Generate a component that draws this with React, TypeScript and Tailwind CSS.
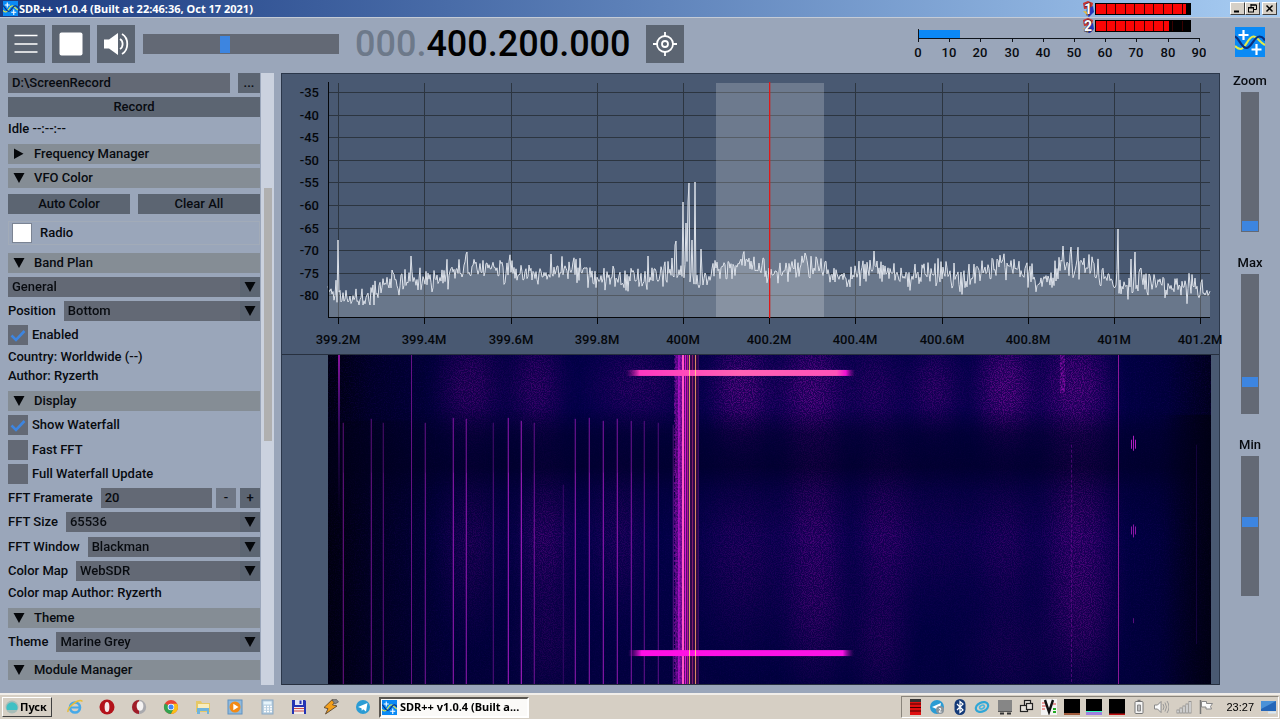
import React, { useId, useState } from "react";

/* ---------- helpers ---------- */

function makeRandom(seed: number) {
  let s = seed;
  return () => {
    s = (s * 1664525 + 1013904223) % 4294967296;
    return s / 4294967296;
  };
}

const envelope: [number, number][] = [
  [0, 219], [20, 223], [38, 225], [50, 216], [62, 208], [80, 206], [100, 206], [115, 203], [128, 196],
  [150, 192], [170, 194], [185, 196], [205, 200], [222, 200], [235, 198], [255, 196], [264, 198], [272, 206],
  [300, 204], [325, 205], [340, 200], [352, 196], [365, 205], [378, 206], [390, 200], [410, 191], [425, 193],
  [440, 201], [455, 197], [475, 190], [492, 190], [502, 200], [518, 206], [535, 197], [548, 193], [560, 203],
  [580, 204], [600, 200], [613, 199], [625, 206], [640, 207], [652, 197], [665, 192], [690, 191], [702, 206],
  [715, 207], [728, 196], [750, 191], [765, 194], [778, 206], [800, 212], [815, 206], [830, 209], [850, 215],
  [865, 214], [875, 220], [883, 222],
];

const peaks: [number, number][] = [
  [10, 167], [83, 183], [139, 179], [223, 181], [320, 183], [344, 185], [347, 172], [348, 168], [355, 129],
  [358, 150], [360, 129], [361, 110], [364, 167], [367, 109], [373, 176], [477, 180], [546, 178],
  [735, 173], [743, 174], [790, 156], [803, 186], [807, 179],
];

function buildTrace(): string {
  const rnd = makeRandom(77);
  const peakAt = new Map(peaks);
  const pts: string[] = [];
  let seg = 0;
  for (let x = 0; x <= 882; x += 1) {
    while (seg < envelope.length - 2 && envelope[seg + 1][0] < x) seg += 1;
    const [x0, y0] = envelope[seg];
    const [x1, y1] = envelope[seg + 1];
    const base = y0 + ((y1 - y0) * (x - x0)) / (x1 - x0);
    const spread = (rnd() + rnd() + rnd() - 1.5) * 13;
    let y = base + spread;
    if (x > 344 && x < 373 && x % 2 === 0) y = base + 6;
    const p = peakAt.get(x);
    if (p !== undefined) y = p;
    pts.push(`${x + 47},${Math.min(232, y).toFixed(1)}`);
  }
  return pts.join(" ");
}

const trace = buildTrace();

/* ---------- small controls ---------- */

const FIELD = "bg-[#636975] text-[13px] leading-[20px] text-[#080b10] outline-none";
const BUTTON = "h-5 bg-[#5c6572] text-[13px] leading-[20px] text-[#080b10] text-center";

function Header({ children, open = true, className = "mt-[7px]" }: { children: React.ReactNode; open?: boolean; className?: string }) {
  return (
    <button type="button" className={`flex h-5 w-full items-center bg-[#858d95] pl-[5px] text-left ${className}`}>
      <svg width="12" height="12" viewBox="0 0 12 12" aria-hidden="true">
        {open ? <path d="M.5 1h11L6 11z" fill="#05070a" /> : <path d="M1 .5v10.500l9.500-5.200z" fill="#05070a" />}
      </svg>
      <span className="ml-[9px]">{children}</span>
    </button>
  );
}

function Combo({ label, hidden = false, options, className = "mt-1" }: { label: string; hidden?: boolean; options: string[]; className?: string }) {
  const id = useId();
  return (
    <div className={`flex h-5 items-center gap-2 ${className}`}>
      {!hidden && <label htmlFor={id} className="shrink-0">{label}</label>}
      <div className="relative h-5 min-w-0 flex-1">
        <select id={id} aria-label={hidden ? label : undefined} className={`h-5 w-full appearance-none pl-1 ${FIELD}`}>
          {options.map((o) => <option key={o}>{o}</option>)}
        </select>
        <span className="pointer-events-none absolute right-0 top-0 flex h-5 w-5 items-center justify-center bg-[#5c6572]">
          <svg width="12" height="12" viewBox="0 0 12 12" aria-hidden="true"><path d="M.5 1h11L6 11z" fill="#05070a" /></svg>
        </span>
      </div>
    </div>
  );
}

function Check({ label, on, className = "mt-1" }: { label: string; on: boolean; className?: string }) {
  const [checked, setChecked] = useState(on);
  return (
    <label className={`flex h-5 items-center gap-1 ${className}`}>
      <span className="relative h-5 w-5">
        <input type="checkbox" checked={checked} onChange={() => setChecked(!checked)} className="block h-5 w-5 appearance-none bg-[#636975]" />
        {checked && (
          <svg className="pointer-events-none absolute left-0 top-0" width="20" height="20" viewBox="0 0 20 20" fill="none" aria-hidden="true">
            <path d="M3.500 10.500L8 15l8.500-9" stroke="#3d85e0" strokeWidth="2.600" />
          </svg>
        )}
      </span>
      <span>{label}</span>
    </label>
  );
}

function SideSlider({ label, value }: { label: string; value: number }) {
  const id = useId();
  return (
    <div className="flex flex-col items-center">
      <label htmlFor={id} className="h-4 leading-4">{label}</label>
      <input
        id={id}
        type="range"
        defaultValue={value}
        className="mt-[3px] h-[140px] w-[18px] appearance-none bg-[#636975] p-px [direction:rtl] [writing-mode:vertical-lr] [&::-webkit-slider-thumb]:h-[10px] [&::-webkit-slider-thumb]:w-[16px] [&::-webkit-slider-thumb]:appearance-none [&::-webkit-slider-thumb]:bg-[#3d85e0]"
      />
    </div>
  );
}

function SdrLogo({ size }: { size: number }) {
  return (
    <svg width={size} height={size} viewBox="0 0 30 30" className="shrink-0" aria-hidden="true">
      <rect width="30" height="30" fill="#0a8af5" />
      <path d="M0 19c2 2 3.500 3 5.500 3 5 0 7.500-12.500 13-12.500 4 0 6 6 11.500 8.500" fill="none" stroke="#e6ec46" strokeWidth="2.200" />
      <path d="M0 9.500c4 1.500 6.500 11.500 11.500 11.500S19 9.500 24.500 9.500c2.500 0 4 1.500 5.500 4" fill="none" stroke="#0b2f7d" strokeWidth="2.200" />
      <path d="M8.500 3v10M3.500 8h10M21.500 17v11M16.500 22.500h10" stroke="#fff" strokeWidth="2.200" />
    </svg>
  );
}

/* ---------- header widgets ---------- */

function LevelMeter() {
  return (
    <svg width="294" height="34" viewBox="0 0 294 34" className="shrink-0" role="img" aria-label="Signal level">
      <rect x="6" y="2" width="42" height="8" fill="#0b88f6" />
      <path d="M6.500 1v13M6 10.500h282" stroke="#10141b" fill="none" />
      {[0, 10, 20, 30, 40, 50, 60, 70, 80, 90].map((v, i) => (
        <g key={v}>
          <path d={`M${Math.round(i * 31.2) + 6.5} 10v4`} stroke="#10141b" />
          <text x={Math.round(i * 31.2) + 6} y="29" textAnchor="middle" fontSize="13" fill="#080b10">{v}</text>
        </g>
      ))}
    </svg>
  );
}

function CpuBars() {
  const rows = [{ y: 3, n: "1", w: 90 }, { y: 20, n: "2", w: 73 }];
  return (
    <svg width="110" height="32" viewBox="0 0 110 32" className="absolute left-[1082px] top-px z-10" role="img" aria-label="Processor load">
      {rows.map((r) => (
        <g key={r.n}>
          <path d={`M1 ${r.y - 1}l5-2 5 2-1 5-8 1z`} fill="#c9342c" />
          <path d={`M5 ${r.y + 5}l6-3 1 6-5 5-3-2z`} fill="#2438b8" />
          <path d={`M1 ${r.y + 7}l5 5 1-4z`} fill="#e8c02a" />
          <text x="6" y={r.y + 10} textAnchor="middle" fontSize="14" fontWeight="700" fill="#fff" stroke="#2b1a3a" strokeWidth="1" paintOrder="stroke">{r.n}</text>
          <rect x="13" y={r.y - 1} width="96" height="12" fill="#000" />
          <rect x="14" y={r.y} width={r.w} height="10" fill="#fb0505" />
          {[1, 2, 3, 4, 5, 6, 7, 8, 9].map((k) => <path key={k} d={`M${Math.round(14 + k * 9.5) + 0.5} ${r.y}v10`} stroke="#3a0000" />)}
        </g>
      ))}
    </svg>
  );
}

/* ---------- spectrum ---------- */

const freqLabels = ["399.2M", "399.4M", "399.6M", "399.8M", "400M", "400.2M", "400.4M", "400.6M", "400.8M", "401M", "401.2M"];

function Spectrum() {
  return (
    <svg viewBox="0 0 939 281" preserveAspectRatio="none" className="block h-[281px] w-full overflow-visible" role="img" aria-label="Spectrum">
      {[-35, -40, -45, -50, -55, -60, -65, -70, -75, -80].map((v, i) => {
        const y = Math.round(i * 22.6) + 19;
        return (
          <g key={v}>
            <path d={`M48 ${y + 0.5}h881`} stroke="#2c3540" />
            <text x="38" y={y + 5} textAnchor="end" fontSize="13" fill="#05080c">{v}</text>
          </g>
        );
      })}
      {freqLabels.map((f, i) => {
        const x = Math.round(57.2 + i * 86.2);
        return (
          <g key={f}>
            {f !== "400.2M" && <path d={`M${x + 0.5} 10v234`} stroke="#2c3540" />}
            <path d={`M${x + 0.5} 245v6`} stroke="#05070a" />
            <text x={x} y="271" textAnchor="middle" fontSize="13" fill="#05080c">{f}</text>
          </g>
        );
      })}
      <polygon points={`47,244 ${trace} 929,244`} fill="#fff" fillOpacity=".18" />
      <rect x="435" y="10" width="108" height="234" fill="#fff" fillOpacity=".2" />
      <polyline points={trace} fill="none" stroke="#dce1e9" strokeWidth="1" />
      <path d="M47.500 9v236M47 244.500h882" stroke="#05070a" fill="none" />
      <rect x="488" y="9" width="1" height="236" fill="#e01818" />
      <rect x="489" y="9" width="1" height="236" fill="#c02828" fillOpacity=".35" />
    </svg>
  );
}

/* ---------- waterfall ---------- */

// x, y, rx, ry, strength
const clouds: [number, number, number, number, number][] = [
  [142, 32, 52, 90, 0.5], [209, 32, 46, 90, 0.5], [414, 36, 52, 95, 0.8], [484, 35, 56, 100, 0.8],
  [547, 35, 50, 80, 0.4], [607, 35, 46, 75, 0.5], [678, 34, 50, 95, 0.9], [748, 34, 58, 100, 0.85],
  [310, 30, 80, 75, 0.4], [217, 185, 44, 130, 0.5], [142, 190, 50, 140, 0.3], [220, 290, 50, 90, 0.3],
  [290, 180, 50, 130, 0.3], [486, 170, 50, 190, 0.6], [488, 260, 52, 110, 0.4], [556, 180, 48, 170, 0.5],
  [552, 290, 46, 90, 0.35], [678, 190, 50, 130, 0.35], [750, 170, 58, 190, 0.65], [752, 260, 56, 120, 0.55],
  [414, 200, 70, 150, 0.35], [680, 300, 70, 80, 0.25], [610, 180, 90, 130, 0.2],
];

// x, top, opacity
const carriers: [number, number, number][] = [
  [15, 68, 0.6], [43, 64, 0.6], [55, 68, 0.5], [97, 68, 0.65], [125, 63, 0.85], [138, 64, 0.8], [165, 68, 0.45],
  [180, 63, 0.95], [193, 66, 1], [206, 68, 0.6], [235, 130, 0.25], [247, 64, 0.8], [261, 63, 0.8], [275, 66, 0.85],
  [289, 64, 0.8], [303, 66, 0.7], [316, 66, 0.55], [330, 68, 0.5], [345, 70, 0.5],
];

// x, width, colour, opacity
const core: [number, number, string, number][] = [
  [347, 4, "#8a10a8", 0.45], [350, 2, "#c814d8", 0.65], [352, 2, "#a010b8", 0.6], [354, 2, "#ff58c4", 1],
  [356, 6, "#6a0c80", 0.8], [362, 9, "#3a0a4c", 0.8], [357, 1, "#e814dc", 0.9], [359, 1, "#b81690", 0.95],
  [361, 1, "#d8a060", 1], [364, 1, "#8c2170", 0.9], [367, 1, "#d88a60", 1], [370, 1, "#4a0a70", 0.6],
];

function Waterfall() {
  return (
    <svg viewBox="0 0 883 330" preserveAspectRatio="none" className="block h-full w-full" role="img" aria-label="Waterfall">
      <defs>
        <radialGradient id="cloud">
          <stop offset="0" stopColor="#7a0a98" />
          <stop offset=".25" stopColor="#740a96" stopOpacity=".85" />
          <stop offset=".5" stopColor="#680892" stopOpacity=".48" />
          <stop offset=".75" stopColor="#58088c" stopOpacity=".14" />
          <stop offset="1" stopColor="#50088a" stopOpacity="0" />
        </radialGradient>
        <linearGradient id="base">
          <stop offset="0" stopColor="#000010" />
          <stop offset=".05" stopColor="#000028" />
          <stop offset=".14" stopColor="#02003c" />
          <stop offset=".3" stopColor="#020046" />
          <stop offset=".88" stopColor="#020046" />
          <stop offset=".95" stopColor="#00003a" />
          <stop offset="1" stopColor="#00001c" />
        </linearGradient>
        <linearGradient id="dim" x2="0" y2="1">
          <stop offset=".16" stopColor="#000026" stopOpacity="0" />
          <stop offset=".24" stopColor="#000026" stopOpacity=".5" />
          <stop offset=".34" stopColor="#000022" stopOpacity=".6" />
          <stop offset=".42" stopColor="#000026" stopOpacity=".25" />
          <stop offset=".55" stopColor="#000026" stopOpacity="0" />
          <stop offset=".7" stopColor="#000026" stopOpacity=".1" />
          <stop offset="1" stopColor="#000026" stopOpacity=".25" />
        </linearGradient>
        <linearGradient id="leftShade">
          <stop offset="0" stopColor="#00000c" stopOpacity=".35" />
          <stop offset="1" stopColor="#00000c" stopOpacity="0" />
        </linearGradient>
        <linearGradient id="rightShade">
          <stop offset="0" stopColor="#00000a" stopOpacity="0" />
          <stop offset="1" stopColor="#00000a" stopOpacity=".8" />
        </linearGradient>
        <linearGradient id="burst1">
          <stop offset="0" stopColor="#c010a0" stopOpacity="0" />
          <stop offset=".06" stopColor="#ff38c0" />
          <stop offset=".5" stopColor="#ff62b4" />
          <stop offset=".92" stopColor="#ff52b8" />
          <stop offset=".96" stopColor="#f010d0" />
          <stop offset="1" stopColor="#a010a0" stopOpacity="0" />
        </linearGradient>
        <linearGradient id="burst2">
          <stop offset="0" stopColor="#a010a0" stopOpacity="0" />
          <stop offset=".06" stopColor="#ff10e4" />
          <stop offset=".95" stopColor="#fb14e6" />
          <stop offset="1" stopColor="#a010a0" stopOpacity="0" />
        </linearGradient>
        <linearGradient id="fadeDown" x2="0" y2="1">
          <stop offset="0" stopColor="#b01cc0" />
          <stop offset=".3" stopColor="#7014a0" stopOpacity=".8" />
          <stop offset="1" stopColor="#400880" stopOpacity="0" />
        </linearGradient>
        <filter id="grain" x="0" y="0" width="100%" height="100%" filterUnits="objectBoundingBox" colorInterpolationFilters="sRGB">
          <feTurbulence type="fractalNoise" baseFrequency=".9" numOctaves="2" seed="8" />
          <feColorMatrix values="0 0 0 0 1  0 0 0 0 1  0 0 0 0 1  4 0 0 0 -1.650" result="n" />
          <feComposite in="SourceGraphic" in2="n" operator="in" />
        </filter>
        <filter id="speckle" x="0" y="0" width="100%" height="100%" colorInterpolationFilters="sRGB">
          <feTurbulence type="fractalNoise" baseFrequency=".8" numOctaves="2" seed="3" />
          <feColorMatrix values="0 0 0 0 .12  0 0 0 0 0  0 0 0 0 .42  0 3 0 0 -1.350" />
        </filter>
        <filter id="ragged" x="0" y="0" width="100%" height="100%" colorInterpolationFilters="sRGB">
          <feTurbulence type="fractalNoise" baseFrequency=".6 .5" numOctaves="2" seed="5" />
          <feColorMatrix values="0 0 0 0 1  0 0 0 0 1  0 0 0 0 1  3 0 0 0 -1.100" result="n" />
          <feComposite in="SourceGraphic" in2="n" operator="in" />
        </filter>
      </defs>
      <rect width="883" height="330" fill="url(#base)" />
      <g opacity=".3">
        {clouds.map(([x, y, rx, ry, o], i) => <ellipse key={i} cx={x} cy={y} rx={rx} ry={ry} fill="url(#cloud)" opacity={o} />)}
      </g>
      <g filter="url(#grain)" opacity=".85">
        {clouds.map(([x, y, rx, ry, o], i) => <ellipse key={i} cx={x} cy={y} rx={rx} ry={ry} fill="url(#cloud)" opacity={o} />)}
      </g>
      <rect width="883" height="330" filter="url(#speckle)" opacity=".28" />
      <rect width="883" height="330" fill="url(#dim)" />
      <rect x="0" y="66" width="110" height="264" fill="url(#leftShade)" />
      <rect x="830" y="60" width="53" height="270" fill="url(#rightShade)" opacity=".7" />
      {carriers.map(([x, y, o]) => (
        <g key={x} fill="#a51cc0" opacity={o}>
          <rect x={x} y={y} width="1" height={330 - y} opacity=".7" />
          <rect x={x} y={Math.max(118, y)} width="1" height={330 - Math.max(118, y)} opacity=".6" />
          <rect x={x - 1} y={y} width="1" height={330 - y} opacity=".25" />
        </g>
      ))}
      <rect x="10" y="0" width="2" height="160" fill="url(#fadeDown)" opacity=".8" />
      <rect x="83" y="0" width="1" height="330" fill="#9018a8" opacity=".7" />
      <g filter="url(#ragged)"><rect x="346" y="0" width="11" height="330" fill="#9a10b8" opacity=".7" /></g>
      {core.map(([x, w, c, o]) => <rect key={x} x={x} y="0" width={w} height="330" fill={c} opacity={o} />)}
      <rect x="298" y="15" width="229" height="6" fill="url(#burst1)" />
      <rect x="300" y="296" width="226" height="6" fill="url(#burst2)" />
      <path d="M361.500 15v6M367.500 15v6M361.500 296v6M367.500 296v6" stroke="#ffc090" />
      <g filter="url(#ragged)"><rect x="732" y="0" width="5" height="38" fill="#a010b8" opacity=".7" /></g>
      <path d="M743.500 90v240" stroke="#8010a0" strokeOpacity=".5" strokeDasharray="3 2" />
      <path d="M790.500 0v330" stroke="#a41ca8" strokeOpacity=".85" />
      <path d="M868.500 90v200" stroke="#300870" strokeOpacity=".4" />
      <g stroke="#b01cc0" fill="none">
        <path d="M803.500 85v9M805.500 81v15M807.500 85v9" />
        <path d="M803.500 172v8M805.500 170v13M807.500 172v8" strokeOpacity=".8" />
        <path d="M805.500 264v5" strokeOpacity=".5" />
      </g>
    </svg>
  );
}

/* ---------- taskbar icons ---------- */

const launchers: { name: string; art: React.ReactNode }[] = [
  { name: "Internet Explorer", art: <><circle cx="8" cy="8.500" r="5" fill="none" stroke="#46a9e8" strokeWidth="2.600" /><path d="M4 8.500h9" stroke="#46a9e8" strokeWidth="2" /><path d="M1 13C0 8 12-1 15.500 2.500" fill="none" stroke="#e8bd3a" strokeWidth="1.500" /></> },
  { name: "Opera", art: <><circle cx="8" cy="8" r="7.500" fill="#b3121a" /><ellipse cx="8" cy="8" rx="2.400" ry="5" fill="#f5e9e9" /></> },
  { name: "Opera Developer", art: <><circle cx="8" cy="8" r="7.200" fill="#a9a9ad" /><path d="M8 1A7 7 0 0 0 8 15z" fill="#a01c28" /><ellipse cx="9" cy="7" rx="3.400" ry="4.800" fill="#f4f2f2" /></> },
  { name: "Chrome", art: <><circle cx="8" cy="8" r="7" fill="#e94335" /><path d="M1.900 4.500A7 7 0 0 0 8 15l3-5.200z" fill="#32a350" /><path d="M15 8a7 7 0 0 1-7 7l3.500-7-2-3.300h4.700z" fill="#fbc015" /><circle cx="8" cy="8" r="3.300" fill="#fff" /><circle cx="8" cy="8" r="2.500" fill="#4285f4" /></> },
  { name: "Explorer", art: <><path d="M1 2h5l1 2h8v9H1z" fill="#e6c866" /><path d="M3 5h11v4H3z" fill="#f8edbd" /><path d="M2 9h12v6h-2v-3H5v3H2z" fill="#6fb4dc" /></> },
  { name: "Media Player", art: <><rect x="1" y="1" width="14" height="14" fill="#8fb9dc" stroke="#5f92c2" /><circle cx="8" cy="8" r="5.500" fill="#f28a16" /><path d="M6.300 4.800v6.400L11.500 8z" fill="#fff" /></> },
  { name: "Calculator", art: <><rect x="3" y="1" width="11" height="14" fill="#b8cfe0" stroke="#8ba9c4" /><rect x="4.500" y="2.500" width="8" height="3" fill="#e6f4fb" /><path d="M5 7.500h8M5 10h8M5 12.500h8" stroke="#fff" strokeWidth="1.500" strokeDasharray="2 1" /></> },
  { name: "Total Commander", art: <><path d="M1 1h13l1 1v13H1z" fill="#2434b4" /><rect x="4" y="1" width="8" height="5" fill="#dfe3f4" /><rect x="8.500" y="1.500" width="2" height="3.500" fill="#2434b4" /><rect x="3" y="8" width="10" height="7" fill="#f2ece9" /><path d="M3 9.500h10M3 12h10" stroke="#c84848" /></> },
  { name: "Winamp", art: <><path d="M9 .8L1 8.500l4 1.200L2.500 15 14 7l-4.500-1.200L13 2z" fill="#f3a01c" stroke="#5a4630" strokeWidth=".9" /><path d="M9 .8l4.500-.3L15.500 3 12 5 10.500 3z" fill="#8a8a8a" stroke="#444" strokeWidth=".6" /></> },
  { name: "Telegram", art: <><circle cx="8" cy="8" r="7" fill="#2b9cd4" /><path d="M3 8l9.500-4L11 12.500 8.200 10.300 6.800 11.800 6.500 9.300z" fill="#fff" /></> },
];

const tray: { name: string; art: React.ReactNode }[] = [
  { name: "Load", art: <><rect x="3" y="0" width="11" height="16" fill="#e01010" /><path d="M3 1.500h11M3 5h11M3 8.500h11M3 12h11" stroke="#400" /><rect x="3" width="11" height="3" fill="#333" /></> },
  { name: "Telegram", art: <><circle cx="8" cy="8" r="7" fill="#2b9cd4" /><path d="M3 8l9-4-1.500 8-3-2z" fill="#fff" /><circle cx="11" cy="11" r="4" fill="#8a949c" /><path d="M9.800 10q1.200-1.500 2.200 0l-2 3h2.500" fill="none" stroke="#fff" /></> },
  { name: "Bluetooth", art: <><rect x="2.500" y="0" width="11" height="16" rx="5.500" fill="#143a78" /><path d="M5 5l6 6-3 2.500v-11L11 5l-6 6" fill="none" stroke="#fff" strokeWidth="1.200" /></> },
  { name: "Sync", art: <><ellipse cx="8" cy="8" rx="6.500" ry="4.500" transform="rotate(-25 8 8)" fill="none" stroke="#2fa6d6" strokeWidth="2.200" /><ellipse cx="8" cy="8" rx="2.500" ry="1.700" transform="rotate(-25 8 8)" fill="none" stroke="#49b6de" strokeWidth="1.600" /></> },
  { name: "Monitor", art: <><rect x="1" y="1" width="14" height="11" fill="#868686" /><path d="M1 12.500h14" stroke="#555" /><path d="M3 14.500h4M10 14.500h4" stroke="#333" strokeWidth="2" /></> },
  { name: "Windows", art: <><g fill="#e6e2dc" stroke="#222" strokeWidth="1.200"><rect x="5.500" y="1.500" width="6" height="6" /><rect x="1.500" y="6.500" width="7" height="6" /><rect x="7.500" y="4.500" width="6" height="6" /></g></> },
  { name: "Voicemeeter", art: <><rect width="16" height="16" fill="#f3f3f3" /><path d="M1 4h4M1 7h4M1 10h3M12 5h3" stroke="#d44" /><path d="M12 10h3M12 13h3" stroke="#2a2" strokeWidth="2" /><path d="M4 1l4 12 4-12" fill="none" stroke="#111" strokeWidth="2.400" /></> },
  { name: "Graph 1", art: <><rect width="16" height="16" fill="#000" /><rect y="14" width="16" height="2" fill="#a05a3a" /></> },
  { name: "Graph 2", art: <><rect width="16" height="16" fill="#000" /><rect y="12" width="16" height="1" fill="#3fb" /><rect y="13" width="16" height="3" fill="#a080e0" /></> },
  { name: "Graph 3", art: <><rect width="16" height="16" fill="#000" /><rect y="14.500" width="16" height="1.500" fill="#c01010" /></> },
  { name: "Power", art: <><rect x="4" y="2.500" width="8" height="12" rx="1" fill="#f5f5f5" stroke="#777" /><path d="M6.500 1.500h3" stroke="#777" strokeWidth="1.500" /><path d="M6.500 6v6h3V6z" fill="#bbb" stroke="#888" /></> },
  { name: "Volume", art: <><path d="M1.500 6h3L8 2.500v11L4.500 10h-3z" fill="#fafafa" stroke="#888" /><path d="M10 5q2 3 0 6M12 3.500q3 4.500 0 9M14 2q4 6 0 12" fill="none" stroke="#999" /></> },
  { name: "Network", art: <><g fill="#fafafa" stroke="#888" strokeWidth=".8"><rect x="1" y="11" width="2" height="3" /><rect x="4" y="9" width="2" height="5" /><rect x="7" y="7" width="2" height="7" /><rect x="10" y="5" width="2" height="9" /><rect x="13" y="2.500" width="2" height="11.500" /></g></> },
  { name: "Action Center", art: <><path d="M2.500 1v14" stroke="#777" strokeWidth="1.500" /><path d="M3.500 2.500h5v2h6l-2 3 1 2.500H8v-2H3.500z" fill="#fafafa" stroke="#888" /></> },
];

const WINBTN = "flex h-[13px] w-[15px] items-center justify-center border border-b-[#404040] border-l-white border-r-[#404040] border-t-white bg-[#d6d0c7]";

/* ---------- page ---------- */

export default function App() {
  return (
    <div className="relative flex h-screen min-h-[719px] w-full flex-col overflow-hidden bg-[#9aa6ba] font-['Roboto',sans-serif] text-[13px] font-medium leading-4 text-[#080b10]">
      <header className="flex h-[18px] shrink-0 items-center border-b border-[#c4cbd6] bg-linear-to-r from-[#1c3a80] to-[#a8cdf3] pl-[3px] pr-[3px]">
        <SdrLogo size={15} />
        <h1 className="ml-px flex-1 whitespace-nowrap font-['Noto_Sans',sans-serif] text-[11px] font-bold text-white">SDR++ v1.0.4 (Built at 22:46:36, Oct 17 2021)</h1>
        <button type="button" aria-label="Minimize" className={WINBTN}><svg width="9" height="9"><path d="M1 7.500h5" stroke="#000" strokeWidth="2" /></svg></button>
        <button type="button" aria-label="Restore" className={WINBTN}><svg width="9" height="9" fill="none" stroke="#000"><path d="M3 1h5.500v4.500H6M3 0v3M2.500 1h6" /><rect x=".5" y="3.500" width="5" height="4.500" /><path d="M0 4h6" /></svg></button>
        <button type="button" aria-label="Close" className={`ml-[2px] ${WINBTN}`}><svg width="9" height="9"><path d="M1.500 1.500l6 6M7.500 1.500l-6 6" stroke="#000" strokeWidth="1.500" /></svg></button>
      </header>
      <CpuBars />

      <div className="flex h-[55px] shrink-0 items-start pl-[7px] pr-[15px] pt-[7px]">
        <div className="flex gap-[7px]">
          <button type="button" aria-label="Menu" className="flex h-[38px] w-[38px] items-center justify-center bg-[#5c6572]">
            <svg width="24" height="20" viewBox="0 0 24 20"><path d="M.5 1.500h23M.5 10h23M.5 18h23" stroke="#fff" strokeWidth="1.600" /></svg>
          </button>
          <button type="button" aria-label="Stop" className="flex h-[38px] w-[38px] items-center justify-center bg-[#5c6572]">
            <svg width="24" height="24"><rect x=".5" y=".5" width="23" height="23" rx="2" fill="#fff" /></svg>
          </button>
          <button type="button" aria-label="Mute" className="flex h-[38px] w-[38px] items-center justify-center bg-[#5c6572]">
            <svg width="26" height="26" viewBox="0 0 26 26" fill="none" stroke="#fff" strokeWidth="1.800">
              <path d="M1 8.500h5L15 2v22L6 17.500H1z" fill="#fff" stroke="none" />
              <path d="M17 8c3.500 2 3.500 8 0 10M19 3c7 4 7 16 0 20" />
            </svg>
          </button>
        </div>
        <input
          type="range"
          aria-label="Volume"
          defaultValue={41}
          className="ml-2 mt-[9px] h-[20px] w-[196px] appearance-none bg-[#636975] px-[2px] [&::-webkit-slider-thumb]:h-[17px] [&::-webkit-slider-thumb]:w-[10px] [&::-webkit-slider-thumb]:appearance-none [&::-webkit-slider-thumb]:bg-[#3d85e0]"
        />
        <div className="ml-4 mt-px whitespace-nowrap text-[36px] leading-[36px] text-black"><span className="text-[#6d798a]">000.</span>400.200.000</div>
        <button type="button" aria-label="Center tuning" className="ml-[15px] flex h-[38px] w-[38px] items-center justify-center bg-[#5c6572]">
          <svg width="26" height="26" viewBox="0 0 26 26" fill="none" stroke="#fff" strokeWidth="1.800">
            <circle cx="13" cy="13" r="8" /><circle cx="13" cy="13" r="3" /><path d="M13 1v5M13 20v5M1 13h5M20 13h5" />
          </svg>
        </button>
        <div className="ml-auto mt-[3px]"><LevelMeter /></div>
        <div className="ml-[29px] mt-[2px]"><SdrLogo size={30} /></div>
      </div>

      <main className="flex min-h-0 flex-1 pb-2">
        <aside className="flex w-[274px] shrink-0">
          <div className="flex w-[261px] flex-col overflow-hidden pl-2 pr-px">
            <div className="flex gap-2">
              <input aria-label="Recording folder" defaultValue="D:\ScreenRecord" className={`h-5 min-w-0 flex-1 px-1 ${FIELD}`} />
              <button type="button" className={`w-[22px] ${BUTTON}`}>...</button>
            </div>
            <button type="button" className={`mt-1 w-full ${BUTTON}`}>Record</button>
            <p className="mt-1">Idle --:--:--</p>
            <Header open={false}>Frequency Manager</Header>
            <Header className="mt-1">VFO Color</Header>
            <div className="mt-[6px] flex gap-2">
              <button type="button" className={`flex-1 ${BUTTON}`}>Auto Color</button>
              <button type="button" className={`flex-1 ${BUTTON}`}>Clear All</button>
            </div>
            <div className="mt-[7px] flex h-6 items-center gap-2 border border-[#a2abb8] pl-[3px]">
              <button type="button" aria-label="Radio colour" className="h-5 w-5 border border-[#7b8493] bg-white" />
              <span>Radio</span>
            </div>
            <Header className="mt-2">Band Plan</Header>
            <Combo label="Band plan" hidden options={["General"]} />
            <Combo label="Position" options={["Bottom", "Top"]} />
            <Check label="Enabled" on />
            <p className="mt-1">Country: Worldwide (--)</p>
            <p className="mt-[3px]">Author: Ryzerth</p>
            <Header>Display</Header>
            <Check label="Show Waterfall" on />
            <Check label="Fast FFT" on={false} className="mt-[5px]" />
            <Check label="Full Waterfall Update" on={false} />
            <div className="mt-1 flex h-5 items-center gap-1">
              <label htmlFor="framerate" className="mr-1">FFT Framerate</label>
              <input id="framerate" defaultValue="20" className={`h-5 min-w-0 flex-1 px-1 ${FIELD}`} />
              <button type="button" className="h-5 w-5 bg-[#6f7785] text-center">-</button>
              <button type="button" className={`w-5 ${BUTTON}`}>+</button>
            </div>
            <Combo label="FFT Size" options={["65536", "32768"]} />
            <Combo label="FFT Window" options={["Blackman", "Rectangular"]} className="mt-[5px]" />
            <Combo label="Color Map" options={["WebSDR", "Classic"]} />
            <p className="mt-1">Color map Author: Ryzerth</p>
            <Header>Theme</Header>
            <Combo label="Theme" options={["Marine Grey", "Dark"]} />
            <Header className="mt-2">Module Manager</Header>
          </div>
          <div className="flex w-[13px] justify-center bg-[#cbd2df] pt-[115px]">
            <div className="h-[253px] w-2 bg-[#b0b0b0]" />
          </div>
        </aside>

        <section className="ml-[7px] flex min-w-0 flex-1 flex-col border-x border-t border-[#2b374a] bg-[#495972]">
          <div className="-mx-px -mt-px"><Spectrum /></div>
          <div className="min-h-0 flex-1 border-y border-[#27303f] pl-[46px] pr-2"><Waterfall /></div>
        </section>

        <div className="flex w-[60px] shrink-0 flex-col gap-[23px]">
          <SideSlider label="Zoom" value={0} />
          <SideSlider label="Max" value={20} />
          <SideSlider label="Min" value={53} />
        </div>
      </main>

      <footer className="flex h-[26px] shrink-0 items-center border-t-2 border-[#f1eeea] bg-[#d6cfc4] font-['Noto_Sans',sans-serif] text-[11px] text-black">
        <button type="button" className="ml-[2px] flex h-[20px] w-[50px] items-center gap-px border border-b-[#404040] border-l-white border-r-[#404040] border-t-white pl-[2px] font-bold">
          <svg width="14" height="14" viewBox="0 0 14 14" aria-hidden="true"><circle cx="7" cy="7" r="6.500" fill="#a8bdb8" /><path d="M2 10a5.500 5.500 0 1 1 10 0z" fill="#3fc0c4" /></svg>
          <span>Пуск</span>
        </button>
        <nav className="ml-[15px] flex gap-4">
          {launchers.map((l) => (
            <button key={l.name} type="button" aria-label={l.name}><svg width="16" height="16" viewBox="0 0 16 16" className="block">{l.art}</svg></button>
          ))}
        </nav>
        <button type="button" className="ml-[8px] flex h-[21px] w-[150px] items-center gap-[3px] border-2 border-b-white border-l-[#5a5650] border-r-white border-t-[#5a5650] bg-[#fbfaf8] pl-px font-bold">
          <SdrLogo size={15} />
          <span className="whitespace-nowrap">SDR++ v1.0.4 (Built a...</span>
        </button>
        <div className="ml-auto mr-px flex h-[22px] w-[378px] items-center border border-b-white border-l-[#8a857c] border-r-white border-t-[#8a857c] pl-[5px]">
          <div className="flex flex-1 justify-between">
            {tray.map((t) => <svg key={t.name} width="16" height="16" viewBox="0 0 16 16" role="img" aria-label={t.name}>{t.art}</svg>)}
          </div>
          <time className="ml-3 font-['Liberation_Sans',sans-serif] text-[11px] font-normal">23:27</time>
          <svg className="ml-[6px] mr-px" width="17" height="14" viewBox="0 0 17 14" aria-hidden="true"><rect x="1" y="1" width="15" height="10" fill="#2466b8" /><path d="M1 1h15L1 9z" fill="#4b92d8" /><path d="M8 12.500h8" stroke="#d8e8f4" strokeWidth="2" /></svg>
        </div>
      </footer>
    </div>
  );
}
